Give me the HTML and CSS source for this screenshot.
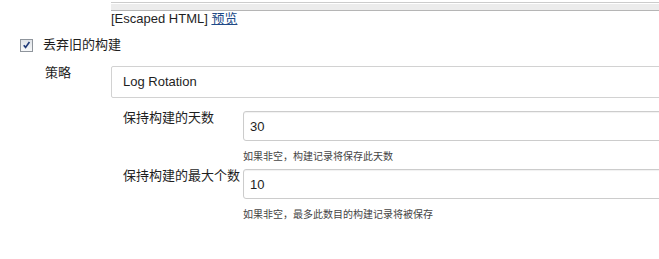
FILE: index.html
```html
<!DOCTYPE html>
<html lang="zh-CN">
<head>
    <meta charset="UTF-8">
    <meta name="viewport" content="width=device-width, initial-scale=1.0">
    <title>丢弃旧的构建</title>
    <link rel="stylesheet" href="styles.css">
</head>
<body>
    <div class="config-page">
        <div class="editor-tail"><div class="editor-bar"></div></div>
        <div class="markup-note">[Escaped HTML] <a href="#">预览</a></div>

        <div class="check-row">
            <span class="check-box">
                <svg width="12" height="12" viewBox="0 0 12 12">
                    <path d="M3 6.2 L5 8.6 L9.2 2.8" fill="none" stroke="#1f3a78" stroke-width="1.8"/>
                </svg>
            </span>
            <span class="check-label">丢弃旧的构建</span>
        </div>

        <div class="strategy-row">
            <div class="strategy-label">策略</div>
            <div class="strategy-box">
                <div class="strategy-select">Log Rotation</div>

                <div class="field-row">
                    <div class="field-label">保持构建的天数</div>
                    <div class="field-control">
                        <input type="text" class="text-input" value="30">
                        <div class="field-help">如果非空，构建记录将保存此天数</div>
                    </div>
                </div>

                <div class="field-row">
                    <div class="field-label">保持构建的最大个数</div>
                    <div class="field-control">
                        <input type="text" class="text-input" value="10">
                        <div class="field-help">如果非空，最多此数目的构建记录将被保存</div>
                    </div>
                </div>
            </div>
        </div>
    </div>
</body>
</html>
```

FILE: styles.css
```css
body {
    margin: 0;
    padding: 0;
    background-color: #ffffff;
    color: #1e1e1e;
    font-family: "Liberation Sans", Arial, "Noto Sans CJK SC", sans-serif;
    font-size: 13px;
    overflow: hidden;
}

.config-page {
    width: 1000px;
}

.editor-tail {
    margin-left: 111px;
    padding-top: 2px;
}

.editor-bar {
    height: 7px;
    border-top: 1px solid #cccccc;
    border-bottom: 1px solid #b5b5b5;
    background: linear-gradient(#ffffff 1px, #ececec 1px);
}

.markup-note {
    margin-left: 111px;
    line-height: 15px;
}

.markup-note a {
    color: #204a87;
    text-decoration: underline;
}

.check-row {
    display: flex;
    align-items: center;
    margin-top: 11px;
    margin-left: 20px;
    line-height: 16px;
}

.check-box {
    display: flex;
    align-items: center;
    justify-content: center;
    width: 11px;
    height: 11px;
    border: 1px solid #8f959c;
    background: linear-gradient(#dfe3e8, #f8f9fa);
}

.check-label {
    margin-left: 10px;
}

.strategy-row {
    display: flex;
    margin-top: 13px;
}

.strategy-label {
    flex: none;
    width: 111px;
    padding-left: 45px;
    box-sizing: border-box;
    line-height: 14px;
}

.strategy-box {
    flex: 1;
}

.strategy-select {
    height: 30px;
    line-height: 30px;
    padding-left: 11px;
    border: 1px solid #d2d2d2;
    border-radius: 2px;
}

.field-row {
    display: flex;
    margin-top: 13px;
    margin-left: 12px;
}

.field-row + .field-row {
    margin-top: 6px;
}

.field-label {
    flex: none;
    width: 120px;
    line-height: 13px;
}

.field-control {
    flex: 1;
}

.text-input {
    display: block;
    width: 600px;
    height: 30px;
    box-sizing: border-box;
    padding: 0 6px;
    border: 1px solid #cccccc;
    border-radius: 3px;
    box-shadow: inset 0 1px 1px rgba(0, 0, 0, 0.06);
    font-family: "Liberation Sans", Arial, sans-serif;
    font-size: 13px;
    color: #1e1e1e;
}

.field-help {
    margin-top: 10px;
    font-size: 10px;
    line-height: 12px;
    color: #444444;
}
```
